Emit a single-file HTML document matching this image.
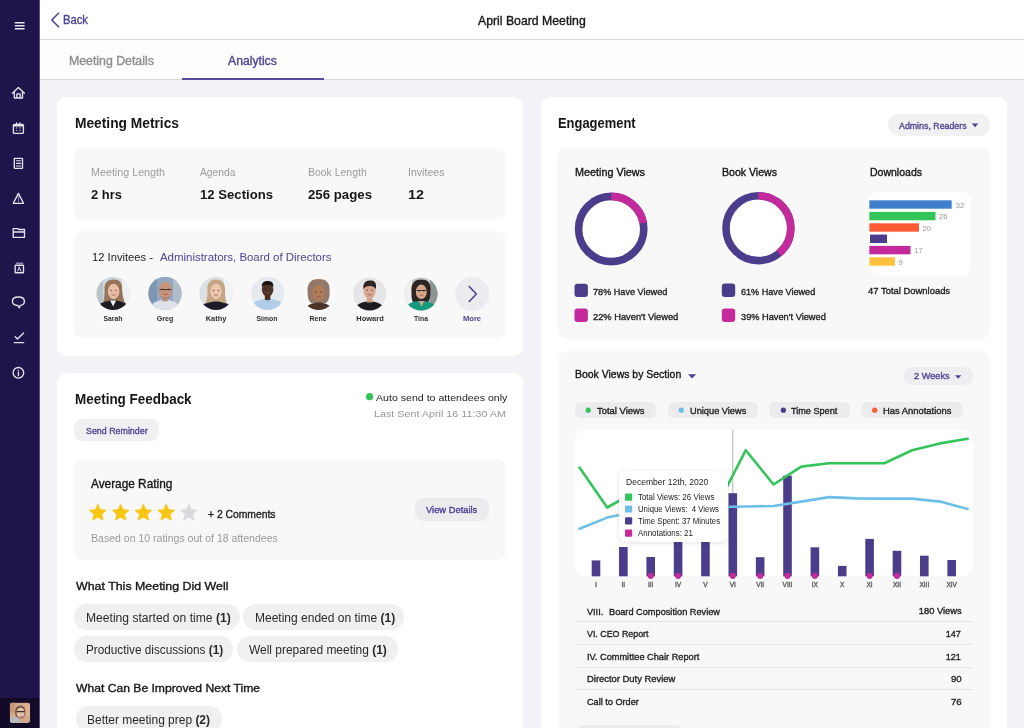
<!DOCTYPE html><html><head><meta charset="utf-8"><style>html,body{margin:0;padding:0;width:1024px;height:728px;overflow:hidden;font-family:"Liberation Sans",sans-serif;}#root{will-change:transform;position:relative;width:1024px;height:728px;overflow:hidden}</style></head><body><div id="root"><div style="position:absolute;left:0px;top:0px;width:1024px;height:728px;background:#f2f2f7;border-radius:0px;"></div><div style="position:absolute;left:40px;top:0px;width:984px;height:39px;background:#ffffff;border-radius:0px;"></div><div style="position:absolute;left:40px;top:39px;width:984px;height:1px;background:#dadadc;border-radius:0px;"></div><div style="position:absolute;left:40px;top:40px;width:984px;height:39px;background:#fdfdfd;border-radius:0px;"></div><div style="position:absolute;left:40px;top:79px;width:984px;height:1px;background:#d8d8db;border-radius:0px;"></div><div style="position:absolute;left:182px;top:77.5px;width:142.39999999999998px;height:2.0px;background:#564c9c;border-radius:0px;"></div><div style="position:absolute;left:0px;top:0px;width:39px;height:728px;background:#1f154a;border-radius:0px;"></div><div style="position:absolute;left:39px;top:0px;width:1px;height:728px;background:#5a5080;border-radius:0px;"></div><div style="position:absolute;left:0px;top:698px;width:39px;height:30px;background:#110b28;border-radius:0px;"></div><div style="position:absolute;left:57px;top:97px;width:466px;height:259px;background:#ffffff;border-radius:9px;"></div><div style="position:absolute;left:57px;top:373px;width:466px;height:387px;background:#ffffff;border-radius:9px;"></div><div style="position:absolute;left:540.5px;top:97px;width:466.5px;height:663px;background:#ffffff;border-radius:9px;"></div><div style="position:absolute;left:74px;top:148px;width:432px;height:72px;background:#f8f8f8;border-radius:9px;"></div><div style="position:absolute;left:74px;top:231px;width:432px;height:107px;background:#f8f8f8;border-radius:9px;"></div><div style="position:absolute;left:74.3px;top:419px;width:84.50000000000001px;height:22px;background:#f0f0f2;border-radius:8px;"></div><div style="position:absolute;left:74px;top:459px;width:432px;height:101px;background:#f8f8f8;border-radius:9px;"></div><div style="position:absolute;left:414.6px;top:498.4px;width:74.5px;height:22.300000000000068px;background:#ececef;border-radius:8px;"></div><div style="position:absolute;left:74.1px;top:604.3px;width:165.9px;height:26.0px;background:#f0f0f0;border-radius:13px;"></div><div style="position:absolute;left:243.4px;top:604.3px;width:160.99999999999997px;height:26.0px;background:#f0f0f0;border-radius:13px;"></div><div style="position:absolute;left:74.1px;top:636.4px;width:159.4px;height:26.0px;background:#f0f0f0;border-radius:13px;"></div><div style="position:absolute;left:237px;top:636.4px;width:161px;height:26.0px;background:#f0f0f0;border-radius:13px;"></div><div style="position:absolute;left:75.6px;top:706.2px;width:146.0px;height:26.0px;background:#f0f0f0;border-radius:13px;"></div><div style="position:absolute;left:887.5px;top:114px;width:102.5px;height:22px;background:#f1f1f2;border-radius:11px;"></div><div style="position:absolute;left:557px;top:148px;width:433px;height:190.5px;background:#f8f8f8;border-radius:9px;"></div><div style="position:absolute;left:868.2px;top:192px;width:103.0px;height:82.69999999999999px;background:#ffffff;border-radius:9px;"></div><div style="position:absolute;left:557.6px;top:350.5px;width:432.4px;height:409.5px;background:#f8f8f8;border-radius:9px;"></div><div style="position:absolute;left:903px;top:367.4px;width:69.79999999999995px;height:17.400000000000034px;background:#eeeef1;border-radius:9px;"></div><div style="position:absolute;left:574.8px;top:401.9px;width:81.40000000000009px;height:16.5px;background:#ececee;border-radius:6px;"></div><div style="position:absolute;left:667.8px;top:401.9px;width:90.0px;height:16.5px;background:#ececee;border-radius:6px;"></div><div style="position:absolute;left:769.4px;top:401.9px;width:80.30000000000007px;height:16.5px;background:#ececee;border-radius:6px;"></div><div style="position:absolute;left:861px;top:401.9px;width:102.10000000000002px;height:16.5px;background:#ececee;border-radius:6px;"></div><div style="position:absolute;left:574.7px;top:430px;width:398.0999999999999px;height:146.29999999999995px;background:#ffffff;border-radius:9px;"></div><div style="position:absolute;left:574.9px;top:620.7px;width:398.0px;height:1.0px;background:#e4e4e6;border-radius:0px;"></div><div style="position:absolute;left:574.9px;top:643.8px;width:398.0px;height:1.0px;background:#e4e4e6;border-radius:0px;"></div><div style="position:absolute;left:574.9px;top:666.7px;width:398.0px;height:1.0px;background:#e4e4e6;border-radius:0px;"></div><div style="position:absolute;left:574.9px;top:689.1px;width:398.0px;height:1.0px;background:#e4e4e6;border-radius:0px;"></div><div style="position:absolute;left:575.9px;top:725px;width:109.30000000000007px;height:35px;background:#ececee;border-radius:9px;"></div><svg style="position:absolute;left:0;top:0" width="1024" height="728" viewBox="0 0 1024 728"><circle cx="611.2" cy="229" r="36.4" fill="#ffffff"/><circle cx="611.2" cy="229" r="32.6" fill="none" stroke="#4b3d8c" stroke-width="7.6"/><circle cx="611.2" cy="229" r="32.6" fill="none" stroke="#c42a9c" stroke-width="7.6" stroke-dasharray="45.06 204.83" transform="rotate(-90 611.2 229)"/><circle cx="758.4" cy="228.2" r="36.2" fill="#ffffff"/><circle cx="758.4" cy="228.2" r="32.400000000000006" fill="none" stroke="#4b3d8c" stroke-width="7.6"/><circle cx="758.4" cy="228.2" r="32.400000000000006" fill="none" stroke="#c42a9c" stroke-width="7.6" stroke-dasharray="79.39 203.58" transform="rotate(-90 758.4 228.2)"/><rect x="574.5" y="283.7" width="13.4" height="13.4" rx="3" fill="#4b3d8c"/><rect x="574.5" y="308.6" width="13.4" height="13.4" rx="3" fill="#c42a9c"/><rect x="721.8" y="283.6" width="13.4" height="13.4" rx="3" fill="#4b3d8c"/><rect x="721.8" y="308.6" width="13.4" height="13.4" rx="3" fill="#c42a9c"/><rect x="869.3" y="200.3" width="82.40000000000009" height="8.4" fill="#3f7fcc"/><rect x="869.3" y="211.9" width="66.20000000000005" height="8.4" fill="#34c55a"/><rect x="869.3" y="223.3" width="49.700000000000045" height="8.4" fill="#ff5a36"/><rect x="870" y="234.6" width="17" height="8.4" fill="#4b3d8c"/><rect x="869.3" y="245.9" width="41.200000000000045" height="8.4" fill="#c42a9c"/><rect x="869.3" y="257.3" width="25.700000000000045" height="8.4" fill="#ffc23e"/><path d="M971.8 123.4 L978.3 123.4 L975.05 127.3 Z" fill="#4d4494"/><path d="M688 374.2 L696.2 374.2 L692.1 378.4 Z" fill="#4d4494"/><path d="M955 375.2 L961.3 375.2 L958.15 378.8 Z" fill="#4d4494"/><circle cx="588.2" cy="410.2" r="2.6" fill="#34c55a"/><circle cx="681.25" cy="410.2" r="2.6" fill="#6cc0e8"/><circle cx="783.4" cy="410.2" r="2.6" fill="#4b3d8c"/><circle cx="874.7" cy="410.2" r="2.6" fill="#ff5a36"/><line x1="732.8" y1="430" x2="732.8" y2="576" stroke="#a0a0a4" stroke-width="0.8"/><rect x="591.70" y="560.4" width="8.6" height="15.90" fill="#4b3d8c"/><rect x="619.06" y="547" width="8.6" height="29.30" fill="#4b3d8c"/><rect x="646.42" y="557" width="8.6" height="19.30" fill="#4b3d8c"/><rect x="673.78" y="480" width="8.6" height="96.30" fill="#4b3d8c"/><rect x="701.14" y="480" width="8.6" height="96.30" fill="#4b3d8c"/><rect x="728.50" y="493.2" width="8.6" height="83.10" fill="#4b3d8c"/><rect x="755.86" y="557.2" width="8.6" height="19.10" fill="#4b3d8c"/><rect x="783.22" y="475.6" width="8.6" height="100.70" fill="#4b3d8c"/><rect x="810.58" y="547.3" width="8.6" height="29.00" fill="#4b3d8c"/><rect x="837.94" y="565.9" width="8.6" height="10.40" fill="#4b3d8c"/><rect x="865.30" y="538.9" width="8.6" height="37.40" fill="#4b3d8c"/><rect x="892.66" y="550.8" width="8.6" height="25.50" fill="#4b3d8c"/><rect x="920.02" y="555.7" width="8.6" height="20.60" fill="#4b3d8c"/><rect x="947.38" y="560" width="8.6" height="16.30" fill="#4b3d8c"/><polyline fill="none" stroke="#34c55a" stroke-width="2.6" stroke-linejoin="round" stroke-linecap="round" points="579.5,467.6 607.2,507.5 634.9,492 662.7,500 690.4,497 718.1,504 745.8,450.2 773.5,484.5 801.3,466.6 829.0,463.2 856.7,463.3 884.4,463.3 912.1,450.2 939.9,443.4 967.6,438.8"/><polyline fill="none" stroke="#6cc0e8" stroke-width="2.6" stroke-linejoin="round" stroke-linecap="round" points="579.5,528.7 607.2,517.6 634.9,512 662.7,509 690.4,507.5 718.1,507 745.8,506.5 773.5,506 801.3,501.6 829.0,497.1 856.7,498.4 884.4,498.6 912.1,498.6 939.9,501.6 967.6,509"/><circle cx="650.72" cy="575.8" r="3.1" fill="#c42a9c"/><circle cx="678.08" cy="575.8" r="3.1" fill="#c42a9c"/><circle cx="732.80" cy="575.8" r="3.1" fill="#c42a9c"/><circle cx="760.16" cy="575.8" r="3.1" fill="#c42a9c"/><circle cx="787.52" cy="575.8" r="3.1" fill="#c42a9c"/><circle cx="814.88" cy="575.8" r="3.1" fill="#c42a9c"/><circle cx="869.60" cy="575.8" r="3.1" fill="#c42a9c"/><circle cx="896.96" cy="575.8" r="3.1" fill="#c42a9c"/><circle cx="369.6" cy="396.7" r="3.6" fill="#34c55a"/><polygon points="97.90,504.20 100.33,509.65 106.27,510.28 101.83,514.28 103.07,520.12 97.90,517.14 92.73,520.12 93.97,514.28 89.53,510.28 95.47,509.65" fill="#f8c512" stroke="#f8c512" stroke-width="0.8" stroke-linejoin="round"/><polygon points="120.65,504.20 123.08,509.65 129.02,510.28 124.58,514.28 125.82,520.12 120.65,517.14 115.48,520.12 116.72,514.28 112.28,510.28 118.22,509.65" fill="#f8c512" stroke="#f8c512" stroke-width="0.8" stroke-linejoin="round"/><polygon points="143.40,504.20 145.83,509.65 151.77,510.28 147.33,514.28 148.57,520.12 143.40,517.14 138.23,520.12 139.47,514.28 135.03,510.28 140.97,509.65" fill="#f8c512" stroke="#f8c512" stroke-width="0.8" stroke-linejoin="round"/><polygon points="166.15,504.20 168.58,509.65 174.52,510.28 170.08,514.28 171.32,520.12 166.15,517.14 160.98,520.12 162.22,514.28 157.78,510.28 163.72,509.65" fill="#f8c512" stroke="#f8c512" stroke-width="0.8" stroke-linejoin="round"/><polygon points="188.90,504.20 191.33,509.65 197.27,510.28 192.83,514.28 194.07,520.12 188.90,517.14 183.73,520.12 184.97,514.28 180.53,510.28 186.47,509.65" fill="#dadadc" stroke="#dadadc" stroke-width="0.8" stroke-linejoin="round"/><circle cx="472.2" cy="294" r="17.1" fill="#ececf0"/><path d="M469.2 286.5 L476.4 294 L469.2 301.5" fill="none" stroke="#4d4494" stroke-width="1.6" stroke-linecap="round" stroke-linejoin="round"/><path d="M58.5 13.2 L51.8 20 L58.5 26.8" fill="none" stroke="#4d4494" stroke-width="1.6" stroke-linecap="round" stroke-linejoin="round"/><clipPath id="av0"><circle cx="0" cy="0" r="16.6"/></clipPath><g transform="translate(113.1 293.4)" clip-path="url(#av0)"><rect x="-17" y="-17" width="34" height="34" fill="#d3dadd"/><rect x="-17" y="-17" width="7" height="34" fill="#b9c4c8"/><rect x="9" y="-17" width="8" height="34" fill="#eef1f1"/><path d="M-8.5 -3 C-9.5 -12 -4 -14 0.5 -14 C6 -14 10 -11 9 -3 C9.5 4 11.5 9 13 12 L-11 12 C-9 8 -8.5 3 -8.5 -3 Z" fill="#95745a"/><ellipse cx="0.5" cy="-2" rx="5.8" ry="7.6" fill="#e7bea4"/><ellipse cx="-1.936" cy="-2.912" rx="0.9" ry="0.6" fill="#3a2a24" opacity="0.75"/><ellipse cx="2.936" cy="-2.912" rx="0.9" ry="0.6" fill="#3a2a24" opacity="0.75"/><path d="M-1.6924000000000001 1.1919999999999997 Q0.5 2.7119999999999997 2.6924 1.1919999999999997" stroke="#8a4a44" stroke-width="0.9" fill="none" opacity="0.7"/><path d="M-17 17 L-15 11 C-10 8.5 -6 7.5 -3 7 L3 7 C6 7.5 10 8.5 15 11 L17 17 Z" fill="#1d1d22"/><path d="M-3 7 L0 13 L3 7 Z" fill="#f2f2f2"/></g><clipPath id="av1"><circle cx="0" cy="0" r="16.6"/></clipPath><g transform="translate(165.0 293.4)" clip-path="url(#av1)"><rect x="-17" y="-17" width="34" height="34" fill="#93a8c0"/><rect x="-17" y="-17" width="9" height="34" fill="#7c96b4"/><rect x="8" y="-17" width="9" height="34" fill="#b0bccb"/><path d="M-16 17 C-14 9 -8 6.5 0 6.5 C8 6.5 14 9 16 17 Z" fill="#dde1e8"/><rect x="-2.8" y="2" width="5.6" height="6" fill="#c09078"/><ellipse cx="0.5" cy="-3.2" rx="6.6" ry="8.6" fill="#c6957c"/><ellipse cx="-2.272" cy="-4.232" rx="0.9" ry="0.6" fill="#3a2a24" opacity="0.75"/><ellipse cx="3.272" cy="-4.232" rx="0.9" ry="0.6" fill="#3a2a24" opacity="0.75"/><path d="M-1.9947999999999997 0.4119999999999995 Q0.5 2.1319999999999997 2.9947999999999997 0.4119999999999995" stroke="#8a4a44" stroke-width="0.9" fill="none" opacity="0.7"/><path d="M-5.5 -3.8 H6.5" stroke="#3a3030" stroke-width="1"/><path d="M-4.5 1.5 C-2 5.5 3 5.5 5.5 1.5 C4.5 6.5 -3.5 6.5 -4.5 1.5 Z" fill="#8a7a70"/></g><clipPath id="av2"><circle cx="0" cy="0" r="16.6"/></clipPath><g transform="translate(216.0 293.4)" clip-path="url(#av2)"><rect x="-17" y="-17" width="34" height="34" fill="#dbe0e3"/><rect x="8" y="-17" width="9" height="34" fill="#f0f2f3"/><path d="M-8.5 -3 C-9.5 -12 -4 -14 0 -14 C5 -14 9.5 -11 9 -3 C9 4 10 8 11 11 L-11 11 C-9 8 -8.5 3 -8.5 -3 Z" fill="#c4a584"/><ellipse cx="0" cy="-2" rx="5.8" ry="7.6" fill="#edc5ac"/><ellipse cx="-2.436" cy="-2.912" rx="0.9" ry="0.6" fill="#3a2a24" opacity="0.75"/><ellipse cx="2.436" cy="-2.912" rx="0.9" ry="0.6" fill="#3a2a24" opacity="0.75"/><path d="M-2.1924 1.1919999999999997 Q0 2.7119999999999997 2.1924 1.1919999999999997" stroke="#8a4a44" stroke-width="0.9" fill="none" opacity="0.7"/><path d="M-17 17 L-14 11 C-9 9.5 -5 8.5 -2 8 L2 8 C5 8.5 9 9.5 14 11 L17 17 Z" fill="#1c1c26"/></g><clipPath id="av3"><circle cx="0" cy="0" r="16.6"/></clipPath><g transform="translate(267.6 293.4)" clip-path="url(#av3)"><rect x="-17" y="-17" width="34" height="34" fill="#e6e9ee"/><path d="M-17 17 C-16 8 -9 5.5 0 5.5 C9 5.5 16 8 17 17 Z" fill="#b2cde8"/><path d="M-3 5.5 L0 9 L3 5.5 Z" fill="#8fb0d4"/><rect x="-2.8" y="1.5" width="5.6" height="5" fill="#4a3024"/><ellipse cx="0" cy="-4.2" rx="5.8" ry="7.4" fill="#4e3426"/><ellipse cx="-2.436" cy="-5.088" rx="0.9" ry="0.6" fill="#3a2a24" opacity="0.75"/><ellipse cx="2.436" cy="-5.088" rx="0.9" ry="0.6" fill="#3a2a24" opacity="0.75"/><path d="M-2.1924 -1.092 Q0 0.3879999999999999 2.1924 -1.092" stroke="#8a4a44" stroke-width="0.9" fill="none" opacity="0.7"/><path d="M-5.8 -6.5 C-6 -12 -2.5 -12.5 0 -12.5 C3 -12.5 6 -12 5.8 -6.5 C4.5 -9.5 -4.5 -9.5 -5.8 -6.5 Z" fill="#1a1210"/></g><clipPath id="av4"><circle cx="0" cy="0" r="16.6"/></clipPath><g transform="translate(318.6 293.4)" clip-path="url(#av4)"><rect x="-17" y="-17" width="34" height="34" fill="#f9f9f9"/><path d="M-11 -1 C-12 -12 -6 -14.5 0 -14.5 C6.5 -14.5 12 -12 11 -1 C11 5 9.5 8 7.5 9.5 L-7.5 9.5 C-9.5 8 -11 5 -11 -1 Z" fill="#94796a"/><path d="M-14 17 C-12 11 -6 9 0 9 C6 9 12 11 14 17 Z" fill="#4a3428"/><ellipse cx="0" cy="-0.5" rx="6.2" ry="7.8" fill="#b27b57"/><ellipse cx="-2.604" cy="-1.436" rx="0.9" ry="0.6" fill="#3a2a24" opacity="0.75"/><ellipse cx="2.604" cy="-1.436" rx="0.9" ry="0.6" fill="#3a2a24" opacity="0.75"/><path d="M-2.3436000000000003 2.776 Q0 4.336 2.3436000000000003 2.776" stroke="#8a4a44" stroke-width="0.9" fill="none" opacity="0.7"/></g><clipPath id="av5"><circle cx="0" cy="0" r="16.6"/></clipPath><g transform="translate(369.6 294.0)" clip-path="url(#av5)"><rect x="-17" y="-17" width="34" height="34" fill="#e5e5e7"/><path d="M-16 17 C-14 10 -8 7.5 0 7.5 C8 7.5 14 10 16 17 Z" fill="#1c1c20"/><rect x="-2.8" y="2.5" width="5.6" height="6" fill="#cf9e86"/><ellipse cx="0" cy="-3" rx="6" ry="7.8" fill="#d8a890"/><ellipse cx="-2.52" cy="-3.936" rx="0.9" ry="0.6" fill="#3a2a24" opacity="0.75"/><ellipse cx="2.52" cy="-3.936" rx="0.9" ry="0.6" fill="#3a2a24" opacity="0.75"/><path d="M-2.2680000000000002 0.2759999999999998 Q0 1.8360000000000003 2.2680000000000002 0.2759999999999998" stroke="#8a4a44" stroke-width="0.9" fill="none" opacity="0.7"/><path d="M-6.2 -4.5 C-7 -13 -2 -13.5 0.5 -13.5 C4.5 -13.5 7.5 -12 6.2 -4.5 C5.5 -9 -4.5 -9.5 -6.2 -4.5 Z" fill="#2e2420"/></g><clipPath id="av6"><circle cx="0" cy="0" r="16.6"/></clipPath><g transform="translate(421.0 294.0)" clip-path="url(#av6)"><rect x="-17" y="-17" width="34" height="34" fill="#c4caca"/><rect x="-17" y="-17" width="8" height="34" fill="#eef0f0"/><rect x="9" y="-17" width="8" height="34" fill="#8c9494"/><path d="M-9.5 -2 C-10.5 -12 -5 -14.5 0 -14.5 C6 -14.5 10.5 -12 9.5 -2 C9.5 4 8 8 6 9 L-7 9 C-9.5 6 -9.5 3 -9.5 -2 Z" fill="#2c2422"/><ellipse cx="0.3" cy="-2.2" rx="5.5" ry="7.2" fill="#d4a58b"/><ellipse cx="-2.0100000000000002" cy="-3.064" rx="0.9" ry="0.6" fill="#3a2a24" opacity="0.75"/><ellipse cx="2.61" cy="-3.064" rx="0.9" ry="0.6" fill="#3a2a24" opacity="0.75"/><path d="M-1.7790000000000001 0.8239999999999998 Q0.3 2.2640000000000002 2.379 0.8239999999999998" stroke="#8a4a44" stroke-width="0.9" fill="none" opacity="0.7"/><path d="M-4.5 -3.5 H5.5" stroke="#2a2222" stroke-width="0.9"/><path d="M-17 17 C-15 9.5 -8.5 7 0 7 C8.5 7 15 9.5 17 17 Z" fill="#169a7e"/><path d="M-2.2 7 L0.5 12.5 L3.2 7 Z" fill="#d4a58b"/></g><g fill="none" stroke="#e6e3f0" stroke-width="1.35" stroke-linecap="round" stroke-linejoin="round"><path d="M14.8 22.8 H24.6 M14.8 25.8 H24.6 M14.8 28.8 H24.6" stroke-width="1.5" stroke-linecap="butt"/><path d="M12.4 93.3 L18.4 87.4 L24.4 93.3 M14.3 91.6 V98 H22.5 V91.6 M16.9 98 V93.8 H20.1 V98"/><rect x="13.4" y="124.4" width="10" height="9" rx="1"/><path d="M13.4 125.6 H23.4" stroke-width="1.6"/><path d="M16.6 122.9 V124.3 M19.9 122.9 V124.3"/><path d="M16.4 127.9 H16.9 M19.7 127.9 H20.2 M16.4 130.5 H16.9 M19.7 130.5 H20.2" stroke-width="1.1" stroke="#b8b2d0"/><rect x="14.3" y="158.3" width="8.2" height="10" rx="0.6"/><path d="M16.5 160.7 H20.5 M16.5 163.4 H20.5 M16.5 166 H20.5" stroke-width="1.1"/><path d="M18.4 193.4 L23.5 203.3 H13.3 Z"/><path d="M18.4 196.3 V202" stroke-width="0.9" stroke="#9c94c0"/><path d="M13.2 237.3 V228.6 H17.8 L18.8 229.5 H24.5 V237.3 Z M13.2 232 H24.5"/><rect x="15.2" y="265.2" width="8.3" height="7.5" rx="0.5"/><path d="M16.4 263.3 H22.6" stroke="#8f86bd" stroke-width="1.6"/><path d="M17.8 271 L19.3 266.8 L20.8 271" stroke-width="1"/><path d="M18.4 297 C22.2 297 24.4 298.8 24.4 301.2 C24.4 303.5 22.5 305.1 20.4 305.4 L19.2 307.8 L17.9 305.5 C14.6 305.3 12.4 303.6 12.4 301.2 C12.4 298.8 14.6 297 18.4 297 Z"/><path d="M15.2 336.7 L17.4 339 L23.6 333 M14.3 342.6 H23.8"/><circle cx="18.4" cy="372.8" r="5.3"/><path d="M18.4 372.2 V375.5 M18.4 370.3 V370.4"/></g><clipPath id="ua"><rect x="9.8" y="702.6" width="20.4" height="20.4" rx="3"/></clipPath><g clip-path="url(#ua)"><rect x="9.8" y="702.6" width="20.4" height="20.4" fill="#d4a88a"/><rect x="9.8" y="702.6" width="5" height="10" fill="#c89878"/><rect x="25" y="704" width="5" height="12" fill="#e0b090"/><ellipse cx="20.3" cy="712" rx="5.4" ry="6.6" fill="#7a5a48"/><ellipse cx="20.6" cy="712.8" rx="4" ry="5" fill="#e6c2a8"/><path d="M16.5 711.6 H24.5" stroke="#3a2a2a" stroke-width="1.2"/><path d="M9.8 723 L9.8 718 C13 716 16 716 19 718 L22 723 Z" fill="#b8b8bc"/><circle cx="21.3" cy="716.5" r="0.8" fill="#d03aa0"/></g></svg><div style="position:absolute;left:619.3px;top:470.7px;width:108.30000000000007px;height:71.59999999999997px;background:#ffffff;border-radius:6px;box-shadow:0 1px 5px rgba(0,0,0,0.12);"></div><svg style="position:absolute;left:0;top:0" width="1024" height="728"><rect x="625" y="493.5" width="7.2" height="7.2" rx="1.2" fill="#34c55a"/><rect x="625" y="505.4" width="7.2" height="7.2" rx="1.2" fill="#6cc0e8"/><rect x="625" y="517.1999999999999" width="7.2" height="7.2" rx="1.2" fill="#4b3d8c"/><rect x="625" y="529.6" width="7.2" height="7.2" rx="1.2" fill="#c42a9c"/></svg><span id="t0" style="position:absolute;left:63.00px;transform-origin:0 0;transform:scaleX(0.9467);top:15.01px;font-size:11.88px;line-height:11.88px;color:#4d4494;-webkit-text-stroke:0.35px currentColor;white-space:pre">Back</span><span id="t1" style="position:absolute;left:477.80px;transform-origin:0 0;transform:scaleX(0.9935);top:15.00px;font-size:12.35px;line-height:12.35px;color:#161618;-webkit-text-stroke:0.35px currentColor;white-space:pre">April Board Meeting</span><span id="t2" style="position:absolute;left:68.70px;transform-origin:0 0;transform:scaleX(1.0361);top:56.01px;font-size:11.88px;line-height:11.88px;color:#8e8e92;-webkit-text-stroke:0.35px currentColor;white-space:pre">Meeting Details</span><span id="t3" style="position:absolute;left:228.40px;transform-origin:0 0;transform:scaleX(1.0267);top:56.01px;font-size:11.88px;line-height:11.88px;color:#4d4494;-webkit-text-stroke:0.35px currentColor;white-space:pre">Analytics</span><span id="t4" style="position:absolute;left:74.70px;transform-origin:0 0;transform:scaleX(0.9928);top:116.90px;font-size:13.87px;line-height:13.87px;color:#161618;font-weight:700;white-space:pre">Meeting Metrics</span><span id="t5" style="position:absolute;left:91.20px;transform-origin:0 0;transform:scaleX(1.0282);top:168.32px;font-size:10.45px;line-height:10.45px;color:#9a9a9e;white-space:pre">Meeting Length</span><span id="t6" style="position:absolute;left:200.00px;transform-origin:0 0;transform:scaleX(0.9861);top:168.32px;font-size:10.45px;line-height:10.45px;color:#9a9a9e;white-space:pre">Agenda</span><span id="t7" style="position:absolute;left:308.30px;transform-origin:0 0;transform:scaleX(1.0013);top:168.32px;font-size:10.45px;line-height:10.45px;color:#9a9a9e;white-space:pre">Book Length</span><span id="t8" style="position:absolute;left:407.60px;transform-origin:0 0;transform:scaleX(1.0143);top:168.32px;font-size:10.45px;line-height:10.45px;color:#9a9a9e;white-space:pre">Invitees</span><span id="t9" style="position:absolute;left:91.20px;transform-origin:0 0;transform:scaleX(0.9749);top:188.01px;font-size:13.3px;line-height:13.3px;color:#161618;font-weight:700;white-space:pre">2 hrs</span><span id="t10" style="position:absolute;left:200.00px;transform-origin:0 0;transform:scaleX(0.9877);top:188.01px;font-size:13.3px;line-height:13.3px;color:#161618;font-weight:700;white-space:pre">12 Sections</span><span id="t11" style="position:absolute;left:308.30px;transform-origin:0 0;transform:scaleX(0.9951);top:188.01px;font-size:13.3px;line-height:13.3px;color:#161618;font-weight:700;white-space:pre">256 pages</span><span id="t12" style="position:absolute;left:407.60px;transform-origin:0 0;transform:scaleX(1.0813);top:188.01px;font-size:13.3px;line-height:13.3px;color:#161618;font-weight:700;white-space:pre">12</span><span id="t13" style="position:absolute;left:92.40px;transform-origin:0 0;transform:scaleX(0.9829);top:252.40px;font-size:11.4px;line-height:11.4px;color:#232325;white-space:pre">12 Invitees -</span><span id="t14" style="position:absolute;left:160.20px;transform-origin:0 0;transform:scaleX(1.0034);top:252.40px;font-size:11.4px;line-height:11.4px;color:#4d4494;white-space:pre">Administrators, Board of Directors</span><span id="t15" style="position:absolute;left:113.20px;transform-origin:50% 0;transform:translateX(-50%) scaleX(0.8575);top:314.62px;font-size:7.98px;line-height:7.98px;color:#2f2f31;font-weight:700;white-space:pre">Sarah</span><span id="t16" style="position:absolute;left:165.00px;transform-origin:50% 0;transform:translateX(-50%) scaleX(0.8974);top:314.62px;font-size:7.98px;line-height:7.98px;color:#2f2f31;font-weight:700;white-space:pre">Greg</span><span id="t17" style="position:absolute;left:216.20px;transform-origin:50% 0;transform:translateX(-50%) scaleX(0.9259);top:314.62px;font-size:7.98px;line-height:7.98px;color:#2f2f31;font-weight:700;white-space:pre">Kathy</span><span id="t18" style="position:absolute;left:267.30px;transform-origin:50% 0;transform:translateX(-50%) scaleX(0.8621);top:314.62px;font-size:7.98px;line-height:7.98px;color:#2f2f31;font-weight:700;white-space:pre">Simon</span><span id="t19" style="position:absolute;left:318.40px;transform-origin:50% 0;transform:translateX(-50%) scaleX(0.8821);top:314.62px;font-size:7.98px;line-height:7.98px;color:#2f2f31;font-weight:700;white-space:pre">Rene</span><span id="t20" style="position:absolute;left:369.70px;transform-origin:50% 0;transform:translateX(-50%) scaleX(0.9373);top:314.62px;font-size:7.98px;line-height:7.98px;color:#2f2f31;font-weight:700;white-space:pre">Howard</span><span id="t21" style="position:absolute;left:421.00px;transform-origin:50% 0;transform:translateX(-50%) scaleX(0.8554);top:314.62px;font-size:7.98px;line-height:7.98px;color:#2f2f31;font-weight:700;white-space:pre">Tina</span><span id="t22" style="position:absolute;left:472.10px;transform-origin:50% 0;transform:translateX(-50%) scaleX(0.9555);top:314.62px;font-size:7.98px;line-height:7.98px;color:#4d4494;font-weight:700;white-space:pre">More</span><span id="t23" style="position:absolute;left:74.80px;transform-origin:0 0;transform:scaleX(0.9704);top:393.21px;font-size:13.87px;line-height:13.87px;color:#161618;font-weight:700;white-space:pre">Meeting Feedback</span><span id="t24" style="position:absolute;left:85.50px;transform-origin:0 0;transform:scaleX(0.9331);top:425.81px;font-size:9.5px;line-height:9.5px;color:#4d4494;-webkit-text-stroke:0.35px currentColor;white-space:pre">Send Reminder</span><span id="t25" style="position:absolute;left:376.40px;transform-origin:0 0;transform:scaleX(1.0624);top:392.91px;font-size:9.97px;line-height:9.97px;color:#232325;white-space:pre">Auto send to attendees only</span><span id="t26" style="position:absolute;left:373.75px;transform-origin:0 0;transform:scaleX(1.0785);top:408.60px;font-size:9.97px;line-height:9.97px;color:#98989c;white-space:pre">Last Sent April 16 11:30 AM</span><span id="t27" style="position:absolute;left:91.20px;transform-origin:0 0;transform:scaleX(0.9958);top:479.01px;font-size:11.88px;line-height:11.88px;color:#161618;-webkit-text-stroke:0.35px currentColor;white-space:pre">Average Rating</span><span id="t28" style="position:absolute;left:208.10px;transform-origin:0 0;transform:scaleX(0.9901);top:510.01px;font-size:10.45px;line-height:10.45px;color:#232325;-webkit-text-stroke:0.35px currentColor;white-space:pre">+ 2 Comments</span><span id="t29" style="position:absolute;left:426.00px;transform-origin:0 0;transform:scaleX(1.0373);top:506.10px;font-size:9.03px;line-height:9.03px;color:#4d4494;-webkit-text-stroke:0.35px currentColor;white-space:pre">View Details</span><span id="t30" style="position:absolute;left:91.20px;transform-origin:0 0;transform:scaleX(1.0090);top:533.91px;font-size:10.45px;line-height:10.45px;color:#9a9a9e;white-space:pre">Based on 10 ratings out of 18 attendees</span><span id="t31" style="position:absolute;left:75.60px;transform-origin:0 0;transform:scaleX(1.0708);top:581.21px;font-size:11.59px;line-height:11.59px;color:#161618;-webkit-text-stroke:0.35px currentColor;white-space:pre">What This Meeting Did Well</span><span id="t32" style="position:absolute;left:75.60px;transform-origin:0 0;transform:scaleX(1.0474);top:682.91px;font-size:11.59px;line-height:11.59px;color:#161618;-webkit-text-stroke:0.35px currentColor;white-space:pre">What Can Be Improved Next Time</span><span id="t33" style="position:absolute;left:558.00px;transform-origin:0 0;transform:scaleX(0.9330);top:116.81px;font-size:13.87px;line-height:13.87px;color:#161618;font-weight:700;white-space:pre">Engagement</span><span id="t34" style="position:absolute;left:899.00px;transform-origin:0 0;transform:scaleX(0.9479);top:121.60px;font-size:9.31px;line-height:9.31px;color:#4d4494;-webkit-text-stroke:0.35px currentColor;white-space:pre">Admins, Readers</span><span id="t35" style="position:absolute;left:574.80px;transform-origin:0 0;transform:scaleX(1.0342);top:167.71px;font-size:10.45px;line-height:10.45px;color:#161618;-webkit-text-stroke:0.35px currentColor;white-space:pre">Meeting Views</span><span id="t36" style="position:absolute;left:722.30px;transform-origin:0 0;transform:scaleX(1.0121);top:167.51px;font-size:10.45px;line-height:10.45px;color:#161618;-webkit-text-stroke:0.35px currentColor;white-space:pre">Book Views</span><span id="t37" style="position:absolute;left:869.60px;transform-origin:0 0;transform:scaleX(1.0070);top:167.60px;font-size:10.45px;line-height:10.45px;color:#161618;-webkit-text-stroke:0.35px currentColor;white-space:pre">Downloads</span><span id="t38" style="position:absolute;left:593.40px;transform-origin:0 0;transform:scaleX(0.9591);top:286.81px;font-size:9.5px;line-height:9.5px;color:#232325;-webkit-text-stroke:0.35px currentColor;white-space:pre">78% Have Viewed</span><span id="t39" style="position:absolute;left:593.40px;transform-origin:0 0;transform:scaleX(0.9782);top:311.51px;font-size:9.5px;line-height:9.5px;color:#232325;-webkit-text-stroke:0.35px currentColor;white-space:pre">22% Haven't Viewed</span><span id="t40" style="position:absolute;left:740.80px;transform-origin:0 0;transform:scaleX(0.9578);top:286.81px;font-size:9.5px;line-height:9.5px;color:#232325;-webkit-text-stroke:0.35px currentColor;white-space:pre">61% Have Viewed</span><span id="t41" style="position:absolute;left:740.80px;transform-origin:0 0;transform:scaleX(0.9724);top:311.51px;font-size:9.5px;line-height:9.5px;color:#232325;-webkit-text-stroke:0.35px currentColor;white-space:pre">39% Haven't Viewed</span><span id="t42" style="position:absolute;left:868.30px;transform-origin:0 0;transform:scaleX(0.9921);top:286.31px;font-size:9.5px;line-height:9.5px;color:#232325;-webkit-text-stroke:0.35px currentColor;white-space:pre">47 Total Downloads</span><span id="t43" style="position:absolute;left:955.80px;transform-origin:0 0;transform:scaleX(1.0000);top:201.81px;font-size:7.6px;line-height:7.6px;color:#98989c;white-space:pre">32</span><span id="t44" style="position:absolute;left:939.00px;transform-origin:0 0;transform:scaleX(1.0000);top:213.20px;font-size:7.6px;line-height:7.6px;color:#98989c;white-space:pre">26</span><span id="t45" style="position:absolute;left:922.50px;transform-origin:0 0;transform:scaleX(1.0000);top:224.61px;font-size:7.6px;line-height:7.6px;color:#98989c;white-space:pre">20</span><span id="t46" style="position:absolute;left:914.20px;transform-origin:0 0;transform:scaleX(1.0000);top:247.31px;font-size:7.6px;line-height:7.6px;color:#98989c;white-space:pre">17</span><span id="t47" style="position:absolute;left:898.40px;transform-origin:0 0;transform:scaleX(1.0000);top:258.70px;font-size:7.6px;line-height:7.6px;color:#98989c;white-space:pre">9</span><span id="t48" style="position:absolute;left:574.80px;transform-origin:0 0;transform:scaleX(1.0020);top:370.21px;font-size:10.45px;line-height:10.45px;color:#161618;-webkit-text-stroke:0.35px currentColor;white-space:pre">Book Views by Section</span><span id="t49" style="position:absolute;left:913.70px;transform-origin:0 0;transform:scaleX(0.9917);top:372.31px;font-size:9.31px;line-height:9.31px;color:#4d4494;-webkit-text-stroke:0.35px currentColor;white-space:pre">2 Weeks</span><span id="t50" style="position:absolute;left:597.00px;transform-origin:0 0;transform:scaleX(0.9918);top:405.76px;font-size:9.5px;line-height:9.5px;color:#232325;-webkit-text-stroke:0.35px currentColor;white-space:pre">Total Views</span><span id="t51" style="position:absolute;left:690.30px;transform-origin:0 0;transform:scaleX(0.9720);top:405.76px;font-size:9.5px;line-height:9.5px;color:#232325;-webkit-text-stroke:0.35px currentColor;white-space:pre">Unique Views</span><span id="t52" style="position:absolute;left:791.25px;transform-origin:0 0;transform:scaleX(0.9589);top:405.76px;font-size:9.5px;line-height:9.5px;color:#232325;-webkit-text-stroke:0.35px currentColor;white-space:pre">Time Spent</span><span id="t53" style="position:absolute;left:882.80px;transform-origin:0 0;transform:scaleX(0.9893);top:405.76px;font-size:9.5px;line-height:9.5px;color:#232325;-webkit-text-stroke:0.35px currentColor;white-space:pre">Has Annotations</span><span id="t54" style="position:absolute;left:586.60px;transform-origin:0 0;transform:scaleX(0.9582);top:606.61px;font-size:9.5px;line-height:9.5px;color:#232325;-webkit-text-stroke:0.35px currentColor;white-space:pre">VIII.</span><span id="t55" style="position:absolute;left:609.00px;transform-origin:0 0;transform:scaleX(0.9686);top:606.61px;font-size:9.5px;line-height:9.5px;color:#232325;-webkit-text-stroke:0.35px currentColor;white-space:pre">Board Composition Review</span><span id="t56" style="position:absolute;left:586.60px;transform-origin:0 0;transform:scaleX(0.9318);top:629.01px;font-size:9.5px;line-height:9.5px;color:#232325;-webkit-text-stroke:0.35px currentColor;white-space:pre">VI. CEO Report</span><span id="t57" style="position:absolute;left:586.60px;transform-origin:0 0;transform:scaleX(0.9697);top:651.90px;font-size:9.5px;line-height:9.5px;color:#232325;-webkit-text-stroke:0.35px currentColor;white-space:pre">IV. Committee Chair Report</span><span id="t58" style="position:absolute;left:586.60px;transform-origin:0 0;transform:scaleX(0.9897);top:674.40px;font-size:9.5px;line-height:9.5px;color:#232325;-webkit-text-stroke:0.35px currentColor;white-space:pre">Director Duty Review</span><span id="t59" style="position:absolute;left:586.60px;transform-origin:0 0;transform:scaleX(0.9618);top:697.01px;font-size:9.5px;line-height:9.5px;color:#232325;-webkit-text-stroke:0.35px currentColor;white-space:pre">Call to Order</span><span id="t60" style="position:absolute;right:62.70px;transform-origin:100% 0;transform:scaleX(0.9823);top:606.31px;font-size:9.5px;line-height:9.5px;color:#232325;-webkit-text-stroke:0.35px currentColor;white-space:pre">180 Views</span><span id="t61" style="position:absolute;right:62.70px;transform-origin:100% 0;transform:scaleX(0.9584);top:629.01px;font-size:9.5px;line-height:9.5px;color:#232325;-webkit-text-stroke:0.35px currentColor;white-space:pre">147</span><span id="t62" style="position:absolute;right:62.70px;transform-origin:100% 0;transform:scaleX(0.9584);top:651.81px;font-size:9.5px;line-height:9.5px;color:#232325;-webkit-text-stroke:0.35px currentColor;white-space:pre">121</span><span id="t63" style="position:absolute;right:62.70px;transform-origin:100% 0;transform:scaleX(1.0115);top:674.40px;font-size:9.5px;line-height:9.5px;color:#232325;-webkit-text-stroke:0.35px currentColor;white-space:pre">90</span><span id="t64" style="position:absolute;right:62.70px;transform-origin:100% 0;transform:scaleX(1.0115);top:697.20px;font-size:9.5px;line-height:9.5px;color:#232325;-webkit-text-stroke:0.35px currentColor;white-space:pre">76</span><span id="t65" style="position:absolute;left:596.00px;transform-origin:50% 0;transform:translateX(-50%) scaleX(1.0000);top:581.61px;font-size:6.55px;line-height:6.55px;color:#5a5a5e;-webkit-text-stroke:0.35px currentColor;white-space:pre">I</span><span id="t66" style="position:absolute;left:623.36px;transform-origin:50% 0;transform:translateX(-50%) scaleX(1.0000);top:581.61px;font-size:6.55px;line-height:6.55px;color:#5a5a5e;-webkit-text-stroke:0.35px currentColor;white-space:pre">II</span><span id="t67" style="position:absolute;left:650.72px;transform-origin:50% 0;transform:translateX(-50%) scaleX(1.0000);top:581.61px;font-size:6.55px;line-height:6.55px;color:#5a5a5e;-webkit-text-stroke:0.35px currentColor;white-space:pre">III</span><span id="t68" style="position:absolute;left:678.08px;transform-origin:50% 0;transform:translateX(-50%) scaleX(1.0000);top:581.61px;font-size:6.55px;line-height:6.55px;color:#5a5a5e;-webkit-text-stroke:0.35px currentColor;white-space:pre">IV</span><span id="t69" style="position:absolute;left:705.44px;transform-origin:50% 0;transform:translateX(-50%) scaleX(1.0000);top:581.61px;font-size:6.55px;line-height:6.55px;color:#5a5a5e;-webkit-text-stroke:0.35px currentColor;white-space:pre">V</span><span id="t70" style="position:absolute;left:732.80px;transform-origin:50% 0;transform:translateX(-50%) scaleX(1.0000);top:581.61px;font-size:6.55px;line-height:6.55px;color:#5a5a5e;-webkit-text-stroke:0.35px currentColor;white-space:pre">VI</span><span id="t71" style="position:absolute;left:760.16px;transform-origin:50% 0;transform:translateX(-50%) scaleX(1.0000);top:581.61px;font-size:6.55px;line-height:6.55px;color:#5a5a5e;-webkit-text-stroke:0.35px currentColor;white-space:pre">VII</span><span id="t72" style="position:absolute;left:787.52px;transform-origin:50% 0;transform:translateX(-50%) scaleX(1.0000);top:581.61px;font-size:6.55px;line-height:6.55px;color:#5a5a5e;-webkit-text-stroke:0.35px currentColor;white-space:pre">VIII</span><span id="t73" style="position:absolute;left:814.88px;transform-origin:50% 0;transform:translateX(-50%) scaleX(1.0000);top:581.61px;font-size:6.55px;line-height:6.55px;color:#5a5a5e;-webkit-text-stroke:0.35px currentColor;white-space:pre">IX</span><span id="t74" style="position:absolute;left:842.24px;transform-origin:50% 0;transform:translateX(-50%) scaleX(1.0000);top:581.61px;font-size:6.55px;line-height:6.55px;color:#5a5a5e;-webkit-text-stroke:0.35px currentColor;white-space:pre">X</span><span id="t75" style="position:absolute;left:869.60px;transform-origin:50% 0;transform:translateX(-50%) scaleX(1.0000);top:581.61px;font-size:6.55px;line-height:6.55px;color:#5a5a5e;-webkit-text-stroke:0.35px currentColor;white-space:pre">XI</span><span id="t76" style="position:absolute;left:896.96px;transform-origin:50% 0;transform:translateX(-50%) scaleX(1.0000);top:581.61px;font-size:6.55px;line-height:6.55px;color:#5a5a5e;-webkit-text-stroke:0.35px currentColor;white-space:pre">XII</span><span id="t77" style="position:absolute;left:924.32px;transform-origin:50% 0;transform:translateX(-50%) scaleX(1.0000);top:581.61px;font-size:6.55px;line-height:6.55px;color:#5a5a5e;-webkit-text-stroke:0.35px currentColor;white-space:pre">XIII</span><span id="t78" style="position:absolute;left:951.68px;transform-origin:50% 0;transform:translateX(-50%) scaleX(1.0000);top:581.61px;font-size:6.55px;line-height:6.55px;color:#5a5a5e;-webkit-text-stroke:0.35px currentColor;white-space:pre">XIV</span><span id="t79" style="position:absolute;left:625.50px;transform-origin:0 0;transform:scaleX(0.9490);top:477.80px;font-size:9.03px;line-height:9.03px;color:#232325;white-space:pre">December 12th, 2020</span><span id="t80" style="position:absolute;left:638.10px;transform-origin:0 0;transform:scaleX(0.9504);top:493.30px;font-size:8.36px;line-height:8.36px;color:#232325;white-space:pre">Total Views: 26 Views</span><span id="t81" style="position:absolute;left:638.10px;transform-origin:0 0;transform:scaleX(0.9311);top:505.21px;font-size:8.36px;line-height:8.36px;color:#232325;white-space:pre">Unique Views:  4 Views</span><span id="t82" style="position:absolute;left:638.10px;transform-origin:0 0;transform:scaleX(0.9349);top:517.02px;font-size:8.36px;line-height:8.36px;color:#232325;white-space:pre">Time Spent: 37 Minutes</span><span id="t83" style="position:absolute;left:638.10px;transform-origin:0 0;transform:scaleX(0.9466);top:529.41px;font-size:8.36px;line-height:8.36px;color:#232325;white-space:pre">Annotations: 21</span><span id="c0" style="position:absolute;left:85.6px;top:612.01px;transform-origin:0 0;transform:scaleX(1.0090);font-size:12px;line-height:12px;color:#2a2a2c;white-space:pre">Meeting started on time <b>(1)</b></span><span id="c1" style="position:absolute;left:255px;top:612.01px;transform-origin:0 0;transform:scaleX(1.0008);font-size:12px;line-height:12px;color:#2a2a2c;white-space:pre">Meeting ended on time <b>(1)</b></span><span id="c2" style="position:absolute;left:85.6px;top:644.10px;transform-origin:0 0;transform:scaleX(0.9788);font-size:12px;line-height:12px;color:#2a2a2c;white-space:pre">Productive discussions <b>(1)</b></span><span id="c3" style="position:absolute;left:248.6px;top:644.10px;transform-origin:0 0;transform:scaleX(0.9948);font-size:12px;line-height:12px;color:#2a2a2c;white-space:pre">Well prepared meeting <b>(1)</b></span><span id="c4" style="position:absolute;left:87.1px;top:713.91px;transform-origin:0 0;transform:scaleX(0.9967);font-size:12px;line-height:12px;color:#2a2a2c;white-space:pre">Better meeting prep <b>(2)</b></span></div></body></html>
